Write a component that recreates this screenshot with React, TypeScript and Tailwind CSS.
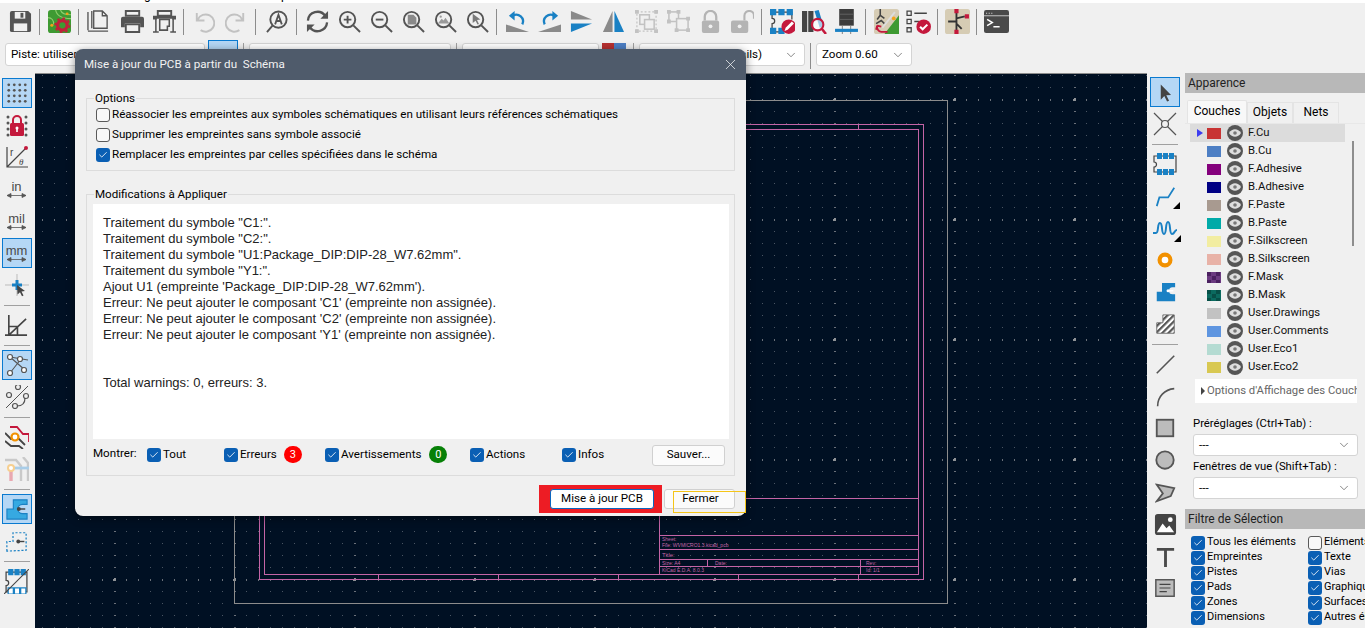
import { ReactNode } from 'react'
import { ChevronDown, X, Check } from 'lucide-react'

const GRAY = '#545454'
const PALE = '#c2c2c2'
const BLUE = '#1a81c4'
const RED = '#c4183c'

function Ico({ children, size = 23 }: { children: ReactNode; size?: number }) {
  return (
    <svg width={size} height={size} viewBox="0 0 24 24" fill="none" stroke="none" className="block">
      {children}
    </svg>
  )
}

function Lens({ children, color = GRAY }: { children?: ReactNode; color?: string }) {
  return (
    <Ico>
      <circle cx="10" cy="10" r="8" stroke={color} strokeWidth="2" />
      <path d="M16 16l7 7" stroke={color} strokeWidth="2" />
      {children}
    </Ico>
  )
}

// top toolbar icons
const saveIcon = (
  <Ico>
    <path d="M1 3a2 2 0 0 1 2-2h17l3 3v17a2 2 0 0 1-2 2H3a2 2 0 0 1-2-2z" fill={GRAY} />
    <rect x="6" y="2" width="11" height="7" fill="#f0f0f0" />
    <rect x="12" y="3" width="3" height="5" fill={GRAY} />
    <rect x="5" y="14" width="14" height="8" fill="#f0f0f0" />
  </Ico>
)
const pcbIcon = (
  <Ico>
    <rect x="0" y="0" width="24" height="24" rx="3" fill="#3e9a32" />
    <path d="M8 0c1 6 6 9 16 9M13 0c1 3 4 5 11 5M0 8c4 0 6 3 6 7" stroke="#8ccf6c" strokeWidth="1.2" />
    <circle cx="15" cy="16" r="5" fill="none" stroke="#c2203a" strokeWidth="3.4" />
    <circle cx="15" cy="16" r="7.4" fill="none" stroke="#c2203a" strokeWidth="2" strokeDasharray="2.6 3.2" />
    <circle cx="4" cy="16" r="1.6" fill="#f2a31c" />
    <circle cx="20" cy="4" r="1.5" fill="#f2a31c" />
  </Ico>
)
const docIcon = (
  <Ico>
    <path d="M5 1v18M1 2v19M1 22h21M7 1h9l5 5v13H7zM16 1v5h5" stroke={GRAY} strokeWidth="1.4" fill="none" />
  </Ico>
)
const printIcon = (
  <Ico>
    <path d="M5 1h14v5H5z" fill="none" stroke={GRAY} strokeWidth="2" />
    <path d="M0 9a2 2 0 0 1 2-2h20a2 2 0 0 1 2 2v9h-4v-4H4v4H0z" fill={GRAY} />
    <path d="M5 15h14v8H5z" fill="none" stroke={GRAY} strokeWidth="2" />
  </Ico>
)
const plotIcon = (
  <Ico>
    <path d="M5 1h14v5H5z" fill="none" stroke={GRAY} strokeWidth="2" />
    <path d="M0 6h24v4h-4v-1H4v1H0z" fill={GRAY} />
    <path d="M3 9v14M21 9v14M0 23h6M18 23h6" stroke={GRAY} strokeWidth="1.6" />
    <path d="M7 10h10v7h-2v4H7z" fill="none" stroke={GRAY} strokeWidth="1.6" />
  </Ico>
)
const undoIcon = (
  <Ico>
    <path d="M5 3v8h8M6 10a9 9 0 1 1 3 11" stroke={PALE} strokeWidth="2" fill="none" />
  </Ico>
)
const redoIcon = (
  <Ico>
    <path d="M19 3v8h-8M18 10a9 9 0 1 0-3 11" stroke={PALE} strokeWidth="2" fill="none" />
  </Ico>
)
const findIcon = (
  <Ico>
    <circle cx="13" cy="10" r="8.5" stroke={GRAY} strokeWidth="2" />
    <path d="M7 16l-6 7" stroke={GRAY} strokeWidth="2" />
    <path d="M9.5 15l3.5-10 3.500 10M10.500 11.500h5" stroke={GRAY} strokeWidth="1.900" />
  </Ico>
)
const refreshIcon = (
  <Ico>
    <path d="M2 11a10 10 0 0 1 18-5M22 13a10 10 0 0 1-18 5" stroke={GRAY} strokeWidth="2.400" />
    <path d="M23 1v8h-8zM1 23v-8h8z" fill={GRAY} />
  </Ico>
)
const zoomInIcon = (
  <Lens>
    <path d="M6 10h8M10 6v8" stroke={GRAY} strokeWidth="2" />
  </Lens>
)
const zoomOutIcon = (
  <Lens>
    <path d="M6 10h8" stroke={GRAY} strokeWidth="2" />
  </Lens>
)
const zoomFitIcon = (
  <Lens>
    <path d="M6 5h6l3 3v7H6z" fill="#8a8a8a" />
  </Lens>
)
const zoomObjIcon = (
  <Lens>
    <path d="M4 14l4-5 2 2 2-3 4 6z" fill="#9a9a9a" />
    <circle cx="7" cy="7" r="1.200" fill="#9a9a9a" />
  </Lens>
)
const zoomSelIcon = (
  <Lens>
    <path d="M7 4l8 6-3.500.5 2 4-1.500.7-2-4-3 2.300z" fill="#7a7a7a" />
  </Lens>
)
const rotLeftIcon = (
  <Ico>
    <path d="M0 15l24 8H0z" fill="#8a8a8a" />
    <path d="M17 15A7 7 0 0 0 7 6" stroke={BLUE} strokeWidth="2.400" />
    <path d="M3 6l6-5v10z" fill={BLUE} />
  </Ico>
)
const rotRightIcon = (
  <Ico>
    <path d="M24 15L0 23h24z" fill="#8a8a8a" />
    <path d="M7 15A7 7 0 0 1 17 6" stroke={BLUE} strokeWidth="2.400" />
    <path d="M21 6l-6-5v10z" fill={BLUE} />
  </Ico>
)
const flipIcon = (
  <Ico>
    <path d="M1 1l22 9H1z" fill="#8a8a8a" />
    <path d="M1 23l22-9H1z" fill={BLUE} />
  </Ico>
)
const mirrorIcon = (
  <Ico>
    <path d="M11 1L1 23h10z" fill="#8a8a8a" />
    <path d="M13 1l10 22H13z" fill={BLUE} />
  </Ico>
)
const groupIcon = (
  <Ico>
    <rect x="2" y="2" width="20" height="20" stroke={PALE} strokeWidth="1.200" strokeDasharray="2 2" />
    <path d="M0 0h4v4H0zM20 0h4v4h-4zM0 20h4v4H0zM20 20h4v4h-4z" fill={PALE} />
    <rect x="5" y="5" width="10" height="10" stroke={PALE} strokeWidth="1.600" />
    <rect x="10" y="10" width="10" height="10" fill="#f0f0f0" stroke={PALE} strokeWidth="1.600" />
  </Ico>
)
const ungroupIcon = (
  <Ico>
    <rect x="2" y="2" width="10" height="10" stroke={PALE} strokeWidth="1.600" />
    <rect x="10" y="9" width="12" height="12" fill="#f0f0f0" stroke={PALE} strokeWidth="1.600" />
    <path d="M0 0h4v4H0zM10 0h4v4h-4zM0 10h4v4H0zM20 7h4v4h-4zM8 19h4v4H8zM20 19h4v4h-4z" fill={PALE} />
  </Ico>
)
const lockIcon = (
  <Ico>
    <path d="M6 11V7a6 6 0 0 1 12 0v4" stroke="#b4b4b4" strokeWidth="2.400" />
    <rect x="3" y="11" width="18" height="13" rx="2" fill="#b4b4b4" />
    <circle cx="12" cy="17" r="2" fill="#f0f0f0" />
  </Ico>
)
const unlockIcon = (
  <Ico>
    <path d="M14 11V6a5 5 0 0 1 10 0v3" stroke="#b4b4b4" strokeWidth="2.200" />
    <rect x="0" y="11" width="18" height="13" rx="2" fill="#b4b4b4" />
    <circle cx="9" cy="17" r="2" fill="#f0f0f0" />
  </Ico>
)
const fpEditIcon = (
  <Ico size={25}>
    <path d="M2 3h19v7M2 3v6a2 2 0 0 1 0 5v8h11" stroke="#444" strokeWidth="1.200" />
    <path d="M0 0h6v6H0zM8 0h6v6H8zM16 0h6v6h-6zM0 18h6v6H0zM8 18h6v6H8z" fill={BLUE} />
    <circle cx="18" cy="17" r="7" fill={RED} />
    <path d="M14 21l1-3 6-6 2 2-6 6z" fill="#fff" />
  </Ico>
)
const libIcon = (
  <Ico size={25}>
    <path d="M0 2h5v20H0zM6 2h5v20H6z" fill="#444" />
    <path d="M12 2l4-1 5 16-4 1z" fill={BLUE} />
    <circle cx="15" cy="15" r="5.500" fill="#fff" fillOpacity=".6" stroke={RED} strokeWidth="2" />
    <path d="M19 19l4 5" stroke={RED} strokeWidth="2.400" />
  </Ico>
)
const boardIcon = (
  <Ico size={25}>
    <path d="M5 0h14v16H5z" fill="#3c3c3c" />
    <path d="M8 16v8M16 16v8" stroke="#888" strokeWidth="1" />
    <rect x="1" y="19" width="22" height="3" fill={BLUE} />
    <path d="M5 5h14M5 10h14" stroke="#666" strokeWidth=".8" />
  </Ico>
)
const updateIcon = (
  <Ico size={25}>
    <rect x="0" y="0" width="24" height="24" rx="2.500" fill="#d6ccb4" />
    <path d="M10 24L24 6v18z" fill="#3e9a32" />
    <path d="M6 0v6M6 6l-3 4M6 6l4 3M2 14l5-3 3 3" stroke="#444" strokeWidth="1.500" />
    <path d="M8 18L20 3" stroke="#ddd" strokeWidth="1.800" />
    <circle cx="19" cy="9" r="1.800" fill="#f2a31c" />
    <path d="M3 16a5 5 0 0 0 4 6h6M3 16l4 1M3 16l-1 4" stroke={RED} strokeWidth="1.800" />
  </Ico>
)
const checklistIcon = (
  <Ico size={25}>
    <path d="M1 2h4v4H1zM1 10h4v4H1zM1 18h4v4H1z" stroke="#444" strokeWidth="1.200" />
    <path d="M8 4h12M8 12h5" stroke="#444" strokeWidth="1.400" />
    <circle cx="17" cy="17" r="7" fill={RED} />
    <path d="M13.500 17l2.500 2.500 4.500-4.500" stroke="#fff" strokeWidth="2" />
  </Ico>
)
const schIcon = (
  <Ico size={25}>
    <rect x="0" y="0" width="24" height="24" rx="2.500" fill="#d6ccb4" />
    <path d="M11 3v18M11 9l8-2M11 14l5 5M3 12h8" stroke="#333" strokeWidth="1.800" />
    <path d="M9 0h4v4H9zM19 5h4v4h-4zM9 20h4v4H9z" fill={RED} />
  </Ico>
)
const termIcon = (
  <Ico size={25}>
    <rect x="0" y="1" width="24" height="22" rx="2" fill="#4a4a4a" />
    <path d="M2 4h1M4.500 4h1M7 4h1" stroke="#ddd" strokeWidth="1" />
    <path d="M0 6.500h24" stroke="#ddd" strokeWidth=".8" />
    <path d="M3 10l5 3-5 3M9 17h6" stroke="#fff" strokeWidth="1.400" />
  </Ico>
)

// left toolbar icons
const gridIcon = (
  <Ico size={22}>
    {[3, 9, 15, 21].map(y =>
      [3, 9, 15, 21].map(x => <circle key={`${x}-${y}`} cx={x} cy={y} r="1.500" fill="#555" />),
    )}
  </Ico>
)
const gridLockIcon = (
  <Ico size={24}>
    {[3, 21].map(x =>
      [4, 10, 16, 22].map(y => <circle key={`${x}-${y}`} cx={x} cy={y} r="1.500" fill="#555" />),
    )}
    <path d="M8 10V7a4 4 0 0 1 8 0v3" stroke={RED} strokeWidth="2" />
    <rect x="5" y="10" width="14" height="13" rx="1.500" fill={RED} />
    <circle cx="12" cy="15" r="1.500" fill="#fff" />
    <path d="M12 15v4" stroke="#fff" strokeWidth="1.600" />
  </Ico>
)
const polarIcon = (
  <Ico size={24}>
    <path d="M2 2v20h21M2 22L21 3" stroke="#444" strokeWidth="1.200" />
    <circle cx="21" cy="3" r="2" fill={RED} />
    <text x="5" y="11" fontSize="10" fill="#444" fontFamily="Liberation Sans">r</text>
    <text x="14" y="20" fontSize="9" fontStyle="italic" fill="#444" fontFamily="Liberation Serif">θ</text>
  </Ico>
)
function UnitIcon({ label }: { label: string }) {
  return (
    <div className="flex flex-col items-center leading-none">
      <span className="text-[13px] leading-[12px] text-[#4a4a4a] font-['Liberation_Sans',sans-serif]">{label}</span>
      <svg width="21" height="5" viewBox="0 0 21 5" className="block">
        <path d="M1 2.500h19M1 2.500l4-2v4zM20 2.500l-4-2v4z" fill="#555" stroke="#555" strokeWidth=".8" />
      </svg>
    </div>
  )
}
const crossSelIcon = (
  <Ico size={24}>
    <path d="M0 12h24M12 1v22" stroke="#bbb" strokeWidth="1" />
    <path d="M7 12h10M12 7v10" stroke={BLUE} strokeWidth="3" />
    <path d="M12 12l8 6-3.500.5 2 4-1.500.7-2-4-2.500 2.300z" fill="#444" />
  </Ico>
)
const angleIcon = (
  <Ico size={23}>
    <path d="M4 1v21M0 22h23M4 22L22 5M4 13h9v9" stroke="#444" strokeWidth="1.700" />
  </Ico>
)
const ratsIcon = (
  <Ico size={24}>
    <path d="M5 4l15 13M5 4l18 3M5 20L16 6" stroke="#555" strokeWidth="1.100" />
    <circle cx="5" cy="4" r="2.500" fill="#fff" stroke="#555" strokeWidth="1.200" />
    <circle cx="15" cy="6" r="2.500" fill="#fff" stroke="#555" strokeWidth="1.200" />
    <circle cx="5" cy="20" r="2.500" fill="#fff" stroke="#555" strokeWidth="1.200" />
    <circle cx="19" cy="17" r="2.500" fill="#fff" stroke="#555" strokeWidth="1.200" />
  </Ico>
)
const curvedIcon = (
  <Ico size={24}>
    <path d="M1 23L23 1" stroke="#555" strokeWidth="1" />
    <circle cx="4" cy="10" r="2.500" fill="none" stroke="#555" strokeWidth="1.200" />
    <circle cx="13" cy="2" r="2.500" fill="none" stroke="#555" strokeWidth="1.200" />
    <circle cx="10" cy="21" r="2.500" fill="none" stroke="#555" strokeWidth="1.200" />
    <circle cx="21" cy="11" r="2.500" fill="none" stroke="#555" strokeWidth="1.200" />
    <path d="M12 21c6 0 8-4 8-8" stroke="#555" strokeWidth="1.200" />
  </Ico>
)
const routeIcon = (
  <Ico size={24}>
    <path d="M5 2h7l6 7h6v8" stroke={RED} strokeWidth="1.800" />
    <path d="M0 8l6 6h8l6 6M0 16l6 5h8l4 3" stroke="#444" strokeWidth="1.800" />
    <circle cx="10" cy="12" r="3.500" fill="#fff" stroke="#f29100" strokeWidth="2.200" />
  </Ico>
)
const ghostIcon = (
  <Ico size={24}>
    <path d="M0 3h11l5 6v15M18 0l5 6v18" stroke="#c9c9c9" strokeWidth="2.400" />
    <path d="M6 11h18" stroke="#a9cde8" strokeWidth="2.800" />
    <path d="M6 14v10" stroke="#e9a8b0" strokeWidth="3.400" />
    <circle cx="6" cy="11" r="3" fill="#fff" stroke="#f6cf90" strokeWidth="2" />
  </Ico>
)
const padBigIcon = (
  <Ico size={22}>
    <path d="M1 23V12h7V2h15v5h-5a5 5 0 0 0 0 10h5v6z" fill="#36a9e1" stroke={BLUE} strokeWidth="1.200" />
    <path d="M13 12h8" stroke="#444" strokeWidth="1.600" />
    <circle cx="14" cy="12" r="2.200" fill="#444" />
  </Ico>
)
const padOutIcon = (
  <Ico size={21}>
    <path d="M1 23V12h7V2h15v20z" stroke={BLUE} strokeWidth="1.400" strokeDasharray="2.400 2" />
    <path d="M13 12h8" stroke="#444" strokeWidth="1.600" />
    <circle cx="14" cy="12" r="2.200" fill="#444" />
  </Ico>
)
const fpMixIcon = (
  <Ico size={25}>
    <path d="M2 3h20v19H2v-6a2 2 0 0 0 0-5z" stroke="#444" strokeWidth="1.200" />
    <path d="M4 0h5v6H4zM10 0h5v6h-5zM16 0h5v6h-5z" fill={BLUE} />
    <path d="M4 18h5v6H4zM10 18h5v6h-5zM16 18h5v6h-5z" fill="#fff" stroke={BLUE} strokeWidth="1.200" />
    <path d="M0 24L24 0" stroke="#444" strokeWidth="1" />
  </Ico>
)

// right toolbar icons
const arrowIcon = (
  <Ico size={19}>
    <path d="M6 2l13 13-6 .5 3.500 7-2.500 1-3.500-7L6 21z" fill="#444" />
  </Ico>
)
const noConnIcon = (
  <Ico size={24}>
    <path d="M1 1l22 22M23 1L1 23" stroke="#555" strokeWidth="1.200" />
    <circle cx="12" cy="12" r="3.500" fill="#f0f0f0" stroke="#555" strokeWidth="1.200" />
  </Ico>
)
const fpIcon = (
  <Ico size={24}>
    <path d="M1 4h22v16H1v-5a2 2 0 0 0 0-5z" stroke="#444" strokeWidth="1.200" />
    <path d="M4 1h5v6H4zM10 1h5v6h-5zM16 1h5v6h-5zM4 17h5v6H4zM10 17h5v6h-5zM16 17h5v6h-5z" fill={BLUE} />
  </Ico>
)
function Corner({ children }: { children: ReactNode }) {
  return (
    <div className="relative">
      {children}
      <div className="absolute -right-[4px] bottom-[-2px] h-0 w-0 border-b-[7px] border-l-[7px] border-b-black border-l-transparent" />
    </div>
  )
}
const trackIcon = (
  <Ico size={21}>
    <path d="M2 23l3-10h10l7-11" stroke={BLUE} strokeWidth="2" />
  </Ico>
)
const tuneIcon = (
  <Ico size={24}>
    <path d="M0 17h3c3 0 1-10 4-10s1 11 4 11 1-12 4-12 1 12 4 12 2-4 5-4" stroke={BLUE} strokeWidth="2" />
  </Ico>
)
const viaIcon = (
  <Ico size={20}>
    <circle cx="12" cy="12" r="6.500" fill="#fff" stroke="#f29100" strokeWidth="5" />
  </Ico>
)
const padIcon = (
  <Ico size={21}>
    <path d="M2 22V11h6V1h15v5h-3a4 4 0 0 0 0 8h3v8z" fill={BLUE} />
    <path d="M14 10h7" stroke="#fff" strokeWidth="1.600" />
    <circle cx="15" cy="10" r="1.800" fill="#fff" />
  </Ico>
)
const hatchIcon = (
  <Ico size={21}>
    <defs>
      <pattern id="hatch" width="5" height="5" patternUnits="userSpaceOnUse" patternTransform="rotate(45)">
        <rect width="5" height="5" fill="#fff" />
        <rect width="2.500" height="5" fill="#555" />
      </pattern>
    </defs>
    <path d="M2 22V10h7V1h13v21z" fill="url(#hatch)" stroke="#666" strokeWidth="1" />
  </Ico>
)
const lineIcon = (
  <Ico size={21}>
    <path d="M2 22L22 2" stroke="#555" strokeWidth="1.800" />
  </Ico>
)
const arcIcon = (
  <Ico size={21}>
    <path d="M3 23C3 12 11 4 22 3" stroke="#555" strokeWidth="1.800" />
  </Ico>
)
const rectIcon = (
  <Ico size={22}>
    <rect x="3" y="3" width="18" height="18" fill="#bcbcbc" stroke="#555" strokeWidth="2" />
  </Ico>
)
const circleIcon = (
  <Ico size={22}>
    <circle cx="12" cy="12" r="9.500" fill="#bcbcbc" stroke="#555" strokeWidth="2" />
  </Ico>
)
const polyIcon = (
  <Ico size={21}>
    <path d="M2 3l20 4-4 9-16 6 7-9z" fill="#bcbcbc" stroke="#555" strokeWidth="2" />
  </Ico>
)
const imageIcon = (
  <Ico size={23}>
    <rect x="1" y="1" width="22" height="22" rx="3" fill="#444" />
    <path d="M3 20l6-9 4 5 3-3 5 7z" fill="#fff" />
    <circle cx="17" cy="7" r="2.500" fill="#fff" />
  </Ico>
)
const textIcon = (
  <Ico size={23}>
    <path d="M3 3h18v3h-7.500v17h-3V6H3z" fill="#4a4a4a" />
  </Ico>
)
const textBoxIcon = (
  <Ico size={22}>
    <rect x="2" y="3" width="20" height="18" fill="#bcbcbc" stroke="#555" strokeWidth="1.600" />
    <path d="M6 8h12M6 12h12M6 16h8" stroke="#444" strokeWidth="1.300" />
  </Ico>
)

const topTools: { icon?: ReactNode; sep?: boolean; ml?: string }[] = [
  { icon: saveIcon },
  { sep: true },
  { icon: pcbIcon },
  { sep: true },
  { icon: docIcon, ml: 'ml-[0px]' },
  { icon: printIcon, ml: 'ml-[2px]' },
  { icon: plotIcon },
  { sep: true },
  { icon: undoIcon },
  { icon: redoIcon, ml: 'ml-[1px]' },
  { sep: true },
  { icon: findIcon, ml: 'ml-[2px]' },
  { sep: true },
  { icon: refreshIcon, ml: 'ml-[1px]' },
  { icon: zoomInIcon },
  { icon: zoomOutIcon },
  { icon: zoomFitIcon },
  { icon: zoomObjIcon },
  { icon: zoomSelIcon },
  { sep: true },
  { icon: rotLeftIcon, ml: 'ml-[1px]' },
  { icon: rotRightIcon },
  { icon: flipIcon },
  { icon: mirrorIcon },
  { icon: groupIcon, ml: 'ml-[1px]' },
  { icon: ungroupIcon },
  { icon: lockIcon },
  { icon: unlockIcon },
  { sep: true },
  { icon: fpEditIcon, ml: 'ml-[1px]' },
  { icon: libIcon },
  { icon: boardIcon },
  { sep: true },
  { icon: updateIcon, ml: 'ml-[1px]' },
  { icon: checklistIcon },
  { sep: true },
  { icon: schIcon },
  { sep: true },
  { icon: termIcon },
]

const leftTools: { icon?: ReactNode; on?: boolean; sep?: boolean }[] = [
  { icon: gridIcon, on: true },
  { icon: gridLockIcon },
  { icon: polarIcon },
  { icon: <UnitIcon label="in" /> },
  { icon: <UnitIcon label="mil" /> },
  { icon: <UnitIcon label="mm" />, on: true },
  { icon: crossSelIcon },
  { sep: true },
  { icon: angleIcon },
  { sep: true },
  { icon: ratsIcon, on: true },
  { icon: curvedIcon },
  { sep: true },
  { icon: routeIcon },
  { icon: ghostIcon },
  { sep: true },
  { icon: padBigIcon, on: true },
  { icon: padOutIcon },
  { sep: true },
  { icon: fpMixIcon },
]

const rightTools: { icon?: ReactNode; on?: boolean; sep?: boolean }[] = [
  { icon: arrowIcon, on: true },
  { icon: noConnIcon },
  { sep: true },
  { icon: fpIcon },
  { icon: <Corner>{trackIcon}</Corner> },
  { icon: <Corner>{tuneIcon}</Corner> },
  { icon: viaIcon },
  { icon: padIcon },
  { icon: hatchIcon },
  { sep: true },
  { icon: lineIcon },
  { icon: arcIcon },
  { icon: rectIcon },
  { icon: circleIcon },
  { icon: polyIcon },
  { icon: imageIcon },
  { icon: textIcon },
  { icon: textBoxIcon },
]

const layers = [
  { name: 'F.Cu', color: 'bg-[#c83434]' },
  { name: 'B.Cu', color: 'bg-[#4d7fc4]' },
  { name: 'F.Adhesive', color: 'bg-[#84007c]' },
  { name: 'B.Adhesive', color: 'bg-[#000084]' },
  { name: 'F.Paste', color: 'bg-[#a89a90]' },
  { name: 'B.Paste', color: 'bg-[#00aaa8]' },
  { name: 'F.Silkscreen', color: 'bg-[#f2eda1]' },
  { name: 'B.Silkscreen', color: 'bg-[#e8b2a7]' },
  { name: 'F.Mask', color: 'bg-[repeating-conic-gradient(#6b3a80_0_25%,#4b2060_0_50%)] bg-[length:9px_8px]' },
  { name: 'B.Mask', color: 'bg-[repeating-conic-gradient(#0b6a5f_0_25%,#074f47_0_50%)] bg-[length:9px_8px]' },
  { name: 'User.Drawings', color: 'bg-[#c2c2c2]' },
  { name: 'User.Comments', color: 'bg-[#5e95e0]' },
  { name: 'User.Eco1', color: 'bg-[#b4dbd2]' },
  { name: 'User.Eco2', color: 'bg-[#d8c852]' },
]

const logLines = [
  'Traitement du symbole "C1:".',
  'Traitement du symbole "C2:".',
  'Traitement du symbole "U1:Package_DIP:DIP-28_W7.62mm".',
  'Traitement du symbole "Y1:".',
  "Ajout U1 (empreinte 'Package_DIP:DIP-28_W7.62mm').",
  "Erreur: Ne peut ajouter le composant 'C1' (empreinte non assignée).",
  "Erreur: Ne peut ajouter le composant 'C2' (empreinte non assignée).",
  "Erreur: Ne peut ajouter le composant 'Y1' (empreinte non assignée).",
]

const filterLeft = ['Tous les éléments', 'Empreintes', 'Pistes', 'Pads', 'Zones', 'Dimensions']
const filterRight = ['Eléments verrouillés', 'Texte', 'Vias', 'Graphiques', 'Surfaces', 'Autres éléments']

function Box({ checked = true }: { checked?: boolean }) {
  return checked ? (
    <span className="flex h-[14px] w-[14px] shrink-0 items-center justify-center rounded-[3px] bg-[#0a5fb4]">
      <Check size={10} color="#fff" strokeWidth={2} />
    </span>
  ) : (
    <span className="h-[14px] w-[14px] shrink-0 rounded-[3px] border border-[#5a5a5a] bg-[#f8f8f8]" />
  )
}

function Select({ children, className }: { children?: ReactNode; className: string }) {
  return (
    <div className={`flex items-center justify-between overflow-hidden whitespace-nowrap rounded-[3px] border border-[#d4d4d4] bg-white pl-[5px] pr-[6px] text-[11.6px] text-black ${className}`}>
      <span className="pt-px">{children}</span>
      <ChevronDown size={14} color="#555" strokeWidth={1.200} />
    </div>
  )
}

function VBar({ tools }: { tools: { icon?: ReactNode; on?: boolean; sep?: boolean }[] }) {
  return (
    <div className="flex flex-col pr-[2px]">
      {tools.map((t, i) =>
        t.sep ? (
          <div key={i} className="flex h-2 items-center justify-center">
            <div className="h-px w-[26px] bg-[#a0a0a0]" />
          </div>
        ) : (
          <div key={i} className="flex h-8 items-center justify-center">
            <div className={`flex h-[30px] w-[30px] items-center justify-center border ${t.on ? 'border-[#0a7ad0] bg-[#b5d7f5]' : 'border-transparent'}`}>
              {t.icon}
            </div>
          </div>
        ),
      )}
    </div>
  )
}

// the PCB editor canvas: grid plus the page drawing sheet
function Canvas() {
  const steps = [0, 12, 24, 36, 48, 60, 72, 84, 96, 108]
  return (
    <svg width="1112" height="555" className="block" shapeRendering="crispEdges">
      <defs>
        <pattern id="grid" x="79" y="25" width="120" height="120" patternUnits="userSpaceOnUse">
          {steps.map(x =>
            steps.map(y => {
              if (x === 0 && y === 0) return <rect key="o" x="-1" y="-1" width="3" height="3" fill="#8f9296" />
              if (y === 0) return <rect key={`${x}`} x={x} y={-1} width="1" height="3" fill="#6a7079" />
              if (x === 0) return <rect key={`y${y}`} x={-1} y={y} width="3" height="1" fill="#6a7079" />
              return <rect key={`${x}-${y}`} x={x} y={y} width="1" height="1" fill="#4a5563" />
            }),
          )}
          <rect x="119" y="-1" width="1" height="3" fill="#8f9296" />
          <rect x="-1" y="119" width="3" height="1" fill="#8f9296" />
        </pattern>
      </defs>
      <rect width="1112" height="555" fill="url(#grid)" />
      <g transform="translate(-35 -73)" fill="none">
        <rect x="234.500" y="99.500" width="713" height="503" stroke="#8c8c8c" />
        <g stroke="#c464a6">
          <rect x="259.500" y="123.500" width="664" height="455" />
          <rect x="264.500" y="128.500" width="654" height="445" />
          <path d="M659.500 497.500h259M659.500 534.500h259M659.500 548.500h259M659.500 558.500h259M659.500 565.500h259M659.500 497v77M707.500 558v7M860.500 558v16" />
          <path d="M378.500 574v4M498.500 574v4M618.500 574v4M738.500 574v4M858.500 574v4M378.500 124v4M498.500 124v4M618.500 124v4M738.500 124v4M858.500 124v4" />
        </g>
        <g fill="#c464a6" fontFamily="Liberation Sans" fontSize="5" stroke="none" shapeRendering="auto">
          <text x="662" y="540">Sheet:</text>
          <text x="662" y="546">File: WVMICRO1.3.kicad_pcb</text>
          <text x="662" y="556" fontSize="6">Title:</text>
          <text x="662" y="564">Size: A4</text>
          <text x="715" y="564">Date:</text>
          <text x="866" y="564">Rev:</text>
          <text x="662" y="571">KiCad E.D.A. 8.0.3</text>
          <text x="866" y="571">Id: 1/1</text>
        </g>
      </g>
    </svg>
  )
}

export default function App() {
  return (
    <div className="relative flex h-[628px] w-[1365px] flex-col overflow-hidden bg-[#f0f0f0] font-['Roboto',sans-serif] text-black">
      {/* Menu bar, cut off by the capture */}
      <div className="h-[3px] overflow-hidden bg-white">
        <div className="-mt-[13px] whitespace-nowrap pl-[8px] text-[12px] leading-4 [word-spacing:10px]">
          Fichier Édition Affichage Placer Router Inspecter Outils Préférences Aide
        </div>
      </div>

      {/* Main toolbar */}
      <div className="flex h-[37px] items-center pl-1">
        {topTools.map((t, i) =>
          t.sep ? (
            <div key={i} className="flex h-[26px] w-[7px] justify-center">
              <div className="w-px bg-[#8c8c8c]" />
            </div>
          ) : (
            <div key={i} className={`flex h-8 w-8 items-center justify-center ${t.ml ?? ''}`}>
              {t.icon}
            </div>
          ),
        )}
      </div>

      {/* Secondary toolbar */}
      <div className="flex h-[33px] items-start gap-[3px] pl-[5px] pt-[3px]">
        <Select className="h-[23px] w-[200px]">Piste: utiliser la largeur de la netclass</Select>
        <div className="h-[27px] w-[30px] -translate-y-[3px] border border-[#0a7ad0] bg-[#b5d7f5]" />
        <div className="mx-[2px] h-[26px] w-px bg-[#a0a0a0]" />
        <Select className="h-[23px] w-[202px]">Via: utiliser les tailles</Select>
        <div className="mx-[2px] h-[26px] w-px bg-[#a0a0a0]" />
        <Select className="h-[23px] w-[137px]">F.Cu (PgUp)</Select>
        <div className="flex h-[15px] w-[24px]">
          <div className="w-1/2 bg-[#b73030]" />
          <div className="w-1/2 bg-[#4d7fc4]" />
        </div>
        <div className="ml-[4px] mr-[2px] h-[26px] w-px bg-[#a0a0a0]" />
        <Select className="h-[23px] w-[166px]">Grille: 1.270 mm (mils)</Select>
        <div className="mx-[2px] h-[26px] w-px bg-[#8c8c8c]" />
        <Select className="h-[23px] w-[96px]">Zoom 0.60</Select>
      </div>

      <div className="flex min-h-0 flex-1">
        {/* Left toolbar */}
        <div className="w-[35px] pt-[4px]">
          <VBar tools={leftTools} />
        </div>

        <div className="h-[555px] w-[1112px] border-t border-[#8c8c8c] bg-[#001023]">
          <Canvas />
        </div>

        {/* Right toolbar */}
        <div className="w-[38px] pt-[3px]">
          <VBar tools={rightTools} />
        </div>

        {/* Appearance and selection filter panels */}
        <div className="flex w-[180px] flex-col text-[11.3px]">
          <div className="flex h-[20px] items-center bg-[#b8b8b8] pl-[3px] text-[12px] text-[#222]">Apparence</div>
          <div className="mt-[7px] flex h-[23px] items-end pl-[2px]">
            <div className="flex h-[23px] w-[60px] items-center justify-center rounded-t-[2px] border border-b-0 border-[#e4e4e4] bg-[#f8f8f8] pb-[3px] text-[12px]">Couches</div>
            <div className="flex h-[21px] w-[46px] items-center justify-center border border-b-0 border-[#e4e4e4] pb-[2px] text-[12px]">Objets</div>
            <div className="flex h-[21px] w-[46px] items-center justify-center border border-b-0 border-[#e4e4e4] pb-[2px] text-[12px]">Nets</div>
          </div>
          <div className="flex border-t border-[#e8e8e8]">
            <div className="ml-[5px] h-[255px] w-[155px] overflow-hidden">
              {layers.map((l, i) => (
                <div key={l.name} className={`flex h-[18px] items-center ${i === 0 ? 'bg-[#dcdcdc]' : ''}`}>
                  <span className="flex w-[17px] justify-center pl-[3px]">
                    {i === 0 && <span className="h-0 w-0 border-y-[4px] border-l-[6px] border-y-transparent border-l-[#3c3cf0]" />}
                  </span>
                  <span className={`h-[11px] w-[14px] ${l.color}`} />
                  <span className="ml-[6px] flex h-4 w-4 items-center justify-center rounded-full bg-[#555]">
                    <svg width="12" height="8" viewBox="0 0 12 8" className="block">
                      <path d="M0 4c3-5 9-5 12 0-3 5-9 5-12 0z" fill="#ddd" />
                      <circle cx="6" cy="4" r="1.800" fill="#777" />
                    </svg>
                  </span>
                  <span className="ml-[5px] text-[#111]">{l.name}</span>
                </div>
              ))}
            </div>
            <div className="ml-[7px] mt-[17px] h-[105px] w-[2px] bg-[#8e8e8e]" />
          </div>
          <div className="ml-[10px] flex h-[24px] w-[162px] items-center overflow-hidden whitespace-nowrap bg-white pl-[6px] text-[#666]">
            <span className="mr-[2px] h-0 w-0 border-y-[4px] border-l-[4px] border-y-transparent border-l-[#444]" />
            Options d'Affichage des Couches
          </div>
          <div className="mt-[13px] pl-[8px] leading-[16px]">Préréglages (Ctrl+Tab) :</div>
          <Select className="ml-[8px] mt-[2px] h-[22px] w-[165px]">---</Select>
          <div className="mt-[3px] pl-[8px] leading-[16px]">Fenêtres de vue (Shift+Tab) :</div>
          <Select className="ml-[8px] mt-[2px] h-[22px] w-[165px]">---</Select>
          <div className="mt-[10px] flex h-[20px] items-center bg-[#b8b8b8] pl-[3px] text-[12px] text-[#222]">Filtre de Sélection</div>
          <div className="mt-[6px] flex overflow-hidden whitespace-nowrap pl-[6px] text-[11px]">
            <div className="w-[117px] shrink-0">
              {filterLeft.map(f => (
                <div key={f} className="flex h-[15px] items-center gap-[2px]">
                  <Box />
                  <span>{f}</span>
                </div>
              ))}
            </div>
            <div className="shrink-0">
              {filterRight.map((f, i) => (
                <div key={f} className="flex h-[15px] items-center gap-[2px]">
                  <Box checked={i !== 0} />
                  <span>{f}</span>
                </div>
              ))}
            </div>
          </div>
        </div>
      </div>

      {/* Update PCB dialog */}
      <div className="absolute left-[75px] top-[49px] flex h-[467px] w-[671px] flex-col overflow-hidden rounded-lg bg-[#f0f0f0] shadow-[0_2px_10px_rgba(0,0,0,0.45)]">
        <div className="flex h-[31px] shrink-0 items-center justify-between bg-[#4f5b6b] pl-[9px] pr-[7px] text-[11.6px] text-[#f2f2f2]">
          <span className="whitespace-pre">Mise à jour du PCB à partir du  Schéma</span>
          <X size={17} color="#fff" strokeWidth={1} />
        </div>
        <div className="flex flex-1 flex-col px-[11px] text-[11.6px]">
          <div className="relative mt-[18px] flex h-[73px] flex-col gap-[6px] border border-[#dcdcdc] pl-[9px] pt-[9px]">
            <span className="absolute -top-[9px] left-[7px] bg-[#f0f0f0] px-px leading-4">Options</span>
            <label className="flex h-[14px] items-center gap-[2px]"><Box checked={false} />Réassocier les empreintes aux symboles schématiques en utilisant leurs références schématiques</label>
            <label className="flex h-[14px] items-center gap-[2px]"><Box checked={false} />Supprimer les empreintes sans symbole associé</label>
            <label className="flex h-[14px] items-center gap-[2px]"><Box />Remplacer les empreintes par celles spécifiées dans le schéma</label>
          </div>
          <div className="relative mt-[23px] flex h-[282px] flex-col border border-[#dcdcdc] pl-[6px] pr-[5px] pt-[9px]">
            <span className="absolute -top-[9px] left-[7px] bg-[#f0f0f0] px-px leading-4">Modifications à Appliquer</span>
            <div className="h-[235px] bg-white px-[10px] pt-[11px] font-['Liberation_Sans',sans-serif] text-[13px] leading-[16px] text-[#222]">
              {logLines.map(l => (
                <div key={l}>{l}</div>
              ))}
              <div className="mt-[32px]">Total warnings: 0, erreurs: 3.</div>
            </div>
            <div className="relative flex h-[32px] items-center">
              <span className="w-[53px] pb-[3px]">Montrer:</span>
              <label className="flex w-[78px] items-center gap-[2px] pl-px"><Box />Tout</label>
              <label className="flex w-[101px] items-center gap-[2px]"><Box />Erreurs
                <span className="ml-[5px] flex h-[17px] w-[18px] items-center justify-center rounded-full bg-[#ff0000] text-[11px] text-white">3</span>
              </label>
              <label className="flex w-[145px] items-center gap-[2px]"><Box />Avertissements
                <span className="ml-[6px] flex h-[17px] w-[18px] items-center justify-center rounded-full bg-[#078007] text-[11px] text-white">0</span>
              </label>
              <label className="flex w-[92px] items-center gap-[2px]"><Box />Actions</label>
              <label className="flex items-center gap-[2px]"><Box />Infos</label>
              <div className="ml-auto mr-[4px] flex h-[21px] w-[73px] items-center justify-center rounded-[3px] border border-[#d0d0d0] bg-[#fbfbfb]">Sauver...</div>
            </div>
          </div>
          <div className="mt-[9px] flex items-center justify-end">
            <div className="bg-[#ed1c24] py-[4px] pl-[11px] pr-[8px]">
              <div className="flex h-[20px] w-[104px] items-center justify-center rounded-[3px] border border-[#0a67c0] bg-white">Mise à jour PCB</div>
            </div>
            <div className="ml-[2px] flex h-[20px] w-[71px] items-center justify-center rounded-[3px] border border-[#d0d0d0] bg-[#fbfbfb] pl-[2px]">Fermer</div>
          </div>
        </div>
      </div>
      {/* yellow annotation frame around the close button */}
      <div className="absolute left-[673px] top-[491px] h-[22px] w-[73px] border border-[#f5c518]" />
    </div>
  )
}
